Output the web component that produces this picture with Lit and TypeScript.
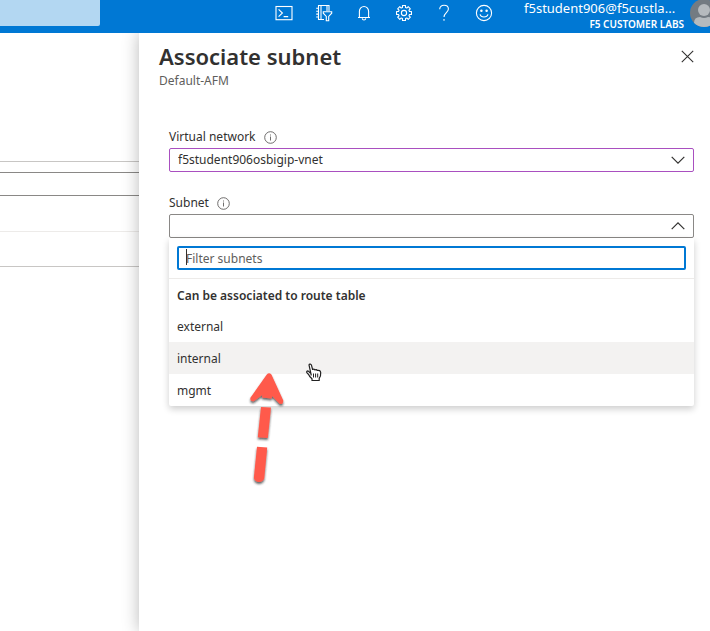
import { LitElement, html, css, svg } from "lit";
import { customElement, state } from "lit/decorators.js";
import { classMap } from "lit/directives/class-map.js";

const infoIcon = html`<svg class="info" viewBox="0 0 13 13" width="13" height="13" aria-hidden="true">
  <circle cx="6.5" cy="6.5" r="5.8" fill="none" stroke="#605e5c" stroke-width="0.9" />
  <path d="M6.5 5.5v4M6.5 3.5v1" stroke="#605e5c" stroke-width="0.9" />
</svg>`;

const chevron = (up: boolean) => html`<svg class="chevron" viewBox="0 0 14 8" width="14" height="8" aria-hidden="true">
  <path d=${up ? "M.7 7.2 7 .9l6.3 6.3" : "M.7.8 7 7.1 13.3.8"} fill="none" stroke="#323130" stroke-width="1.2" />
</svg>`;

const gearPath = (() => {
  const points: string[] = [];
  for (let i = 0; i < 8; i++) {
    const a = (i * Math.PI) / 4 - Math.PI / 2;
    for (const [r, d] of [[5.7, -0.27], [7.6, -0.2], [7.6, 0.2], [5.7, 0.27]]) {
      points.push(`${(9 + r * Math.cos(a + d)).toFixed(2)} ${(9 + r * Math.sin(a + d)).toFixed(2)}`);
    }
  }
  return `M${points.join("L")}Z`;
})();

const tools = [
  { name: "Cloud Shell", art: svg`<rect x="1" y="2.5" width="16" height="13.2"/><path d="M3.6 5.4 7.4 9l-3.8 3.6M8.6 12.6h4.6"/>` },
  { name: "Directories and subscriptions", art: svg`<path d="M14 7V1.5H3.5v14H9M6 1.5v14M1.2 4.3h2.6M1.2 7.2h2.6M1.2 10.1h2.6M1.2 13h2.6M12 1.5V7"/><path d="M8.3 7.8h8.4v1.4l-3 3.2v4.4h-2.4v-4.4l-3-3.2Z"/>` },
  { name: "Notifications", art: svg`<path d="M3 13.5h12M4.4 13.5V7.3a4.6 4.8 0 0 1 9.2 0v6.2M7.2 14.3c.4 2.2 3.2 2.2 3.6 0"/>` },
  { name: "Settings", art: svg`<path d=${gearPath} stroke-linejoin="round"/><circle cx="9" cy="9" r="2.6"/>` },
  { name: "Help", art: svg`<path d="M4.7 5.2C4.7 2.8 6.4 1.2 9 1.2s4.4 1.5 4.4 3.8c0 3.3-4.4 3.9-4.4 8M9 15v1.8"/>` },
  { name: "Feedback", art: svg`<circle cx="9" cy="9" r="7.6"/><path d="M5 10.4c1 3.5 7 3.5 8 0"/><circle cx="6.4" cy="6.8" r=".7" fill="#fff"/><circle cx="11.6" cy="6.8" r=".7" fill="#fff"/>` },
];

@customElement("app-root")
export class AppRoot extends LitElement {
  @state() private active = "internal";
  private subnets = ["external", "internal", "mgmt"];

  static styles = css`
    :host {
      display: flex;
      flex-direction: column;
      min-height: 100vh;
      overflow: hidden;
      position: relative;
      background: #fff;
      color: #323130;
      font: 12px/16px "Noto Sans", "Open Sans", sans-serif;
    }
    * { box-sizing: border-box; }
    button, input, select { font: inherit; color: inherit; margin: 0; }
    .topbar {
      display: flex;
      height: 33px;
      background: #0078d4;
      color: #fff;
    }
    .search {
      width: 100px;
      height: 26px;
      border: 0;
      border-radius: 0 0 2px 0;
      background: #b3d7f2;
    }
    .tools { display: flex; margin-left: auto; }
    .tool {
      width: 40px;
      height: 26px;
      padding: 4px 11px;
      border: 0;
      background: none;
    }
    .tool svg { display: block; fill: none; stroke: #fff; stroke-width: 1.1; }
    .account {
      display: flex;
      gap: 6px;
      width: 206px;
      padding: 0 0 0 20px;
      border: 0;
      background: none;
      color: #fff;
      text-align: right;
    }
    .who { flex: none; width: 160px; }
    .user { display: block; font-size: 13px; line-height: 16px; text-align: left; }
    .tenant { display: block; font-size: 10px; line-height: 16px; font-weight: 600; }
    .avatar { flex: none; display: block; }
    .workspace {
      flex: 1;
      display: grid;
      grid-template-columns: 139px minmax(0, 1fr);
    }
    .page { padding-top: 128px; }
    .row { border-bottom: 1px solid #c8c6c4; }
    .row.gap { height: 1px; }
    .row.search-row {
      height: 24px;
      margin-top: 10px;
      border-top: 1px solid #8a8886;
      border-bottom: 1px solid #8a8886;
    }
    .row.head { height: 36px; border-color: #edebe9; }
    .row.item { height: 35px; }
    .panel {
      position: relative;
      padding: 10px 16px 0 20px;
      background: #fff;
      box-shadow: 0 0 16px rgba(0, 0, 0, 0.28);
      clip-path: inset(0 0 0 -20px);
    }
    .title { display: flex; justify-content: space-between; align-items: center; }
    h1 { margin: 0; font-size: 22px; line-height: 26px; font-weight: 600; }
    .sub { margin: 4px 0 0; color: #605e5c; }
    .close { padding: 0; width: 13px; height: 13px; border: 0; background: none; }
    .close svg { display: block; }
    .form { padding: 40px 0 0 10px; }
    .field { position: relative; margin-bottom: 23px; }
    .label { display: flex; align-items: center; gap: 8px; margin-bottom: 3px; }
    .info { display: block; }
    .control { position: relative; }
    .box {
      display: block;
      width: 100%;
      height: 24px;
      padding: 0 8px;
      border: 1px solid #8a8886;
      border-radius: 2px;
      background: #fff;
      text-align: left;
      appearance: none;
      outline: none;
    }
    .box.changed { border-color: #a94fc0; }
    .chevron { position: absolute; right: 9px; top: 8px; pointer-events: none; }
    .menu {
      position: absolute;
      top: 100%;
      left: 0;
      right: 0;
      background: #fff;
      border-radius: 0 0 2px 2px;
      box-shadow: 0 3px 7px rgba(0, 0, 0, 0.2);
    }
    .filter { position: relative; padding: 8px; border-bottom: 1px solid #edebe9; }
    .filter input {
      display: block;
      width: 100%;
      height: 24px;
      padding: 0 7px;
      border: 2px solid #0078d4;
      border-radius: 2px;
      background: #fff;
      outline: none;
    }
    .filter input::placeholder { color: #605e5c; opacity: 1; }
    .caret { position: absolute; left: 17px; top: 11px; width: 1px; height: 16px; background: #323130; }
    .group { padding: 9px 8px 6px; font-weight: 600; }
    .options { margin: 0; padding: 0; list-style: none; }
    .option { padding: 9px 8px 7px; }
    .option.active { background: #f3f2f1; }
    .arrow { position: absolute; left: 240px; top: 366px; pointer-events: none; }
    .pointer { position: absolute; left: 305px; top: 363px; pointer-events: none; }
  `;

  render() {
    return html`
      <header class="topbar">
        <input class="search" aria-label="Search resources" />
        <div class="tools">
          ${tools.map((t) => html`<button class="tool" aria-label=${t.name}>
            <svg viewBox="0 0 18 18" width="18" height="18">${t.art}</svg>
          </button>`)}
        </div>
        <button class="account">
          <span class="who">
            <span class="user">f5student906@f5custla...</span>
            <span class="tenant">F5 CUSTOMER LABS</span>
          </span>
          <svg class="avatar" viewBox="0 0 28 28" width="28" height="28" aria-hidden="true">
            <defs><clipPath id="face"><circle cx="14" cy="13" r="14" /></clipPath></defs>
            <g clip-path="url(#face)">
              <rect width="28" height="28" fill="#737b82" />
              <circle cx="14" cy="10" r="6" fill="#b5babe" />
              <path d="M4 28v-5q0-6 6-6 4 2 8 0 6 0 6 6v5Z" fill="#b5babe" />
            </g>
          </svg>
        </button>
      </header>
      <div class="workspace">
        <main class="page">
          <div class="row gap"></div>
          <div class="row search-row"></div>
          <div class="row head"></div>
          <div class="row item"></div>
        </main>
        <section class="panel">
          <div class="title">
            <h1>Associate subnet</h1>
            <button class="close" aria-label="Close">
              <svg viewBox="0 0 13 13" width="13" height="13"><path d="M.8.8l11.4 11.4M12.2.8.8 12.2" stroke="#323130" stroke-width="1.1" /></svg>
            </button>
          </div>
          <p class="sub">Default-AFM</p>
          <form class="form">
            <div class="field">
              <label class="label" for="vnet">Virtual network ${infoIcon}</label>
              <div class="control">
                <select class="box changed" id="vnet"><option>f5student906osbigip-vnet</option></select>
                ${chevron(false)}
              </div>
            </div>
            <div class="field">
              <label class="label" for="subnet">Subnet ${infoIcon}</label>
              <div class="control">
                <button class="box" id="subnet" type="button" role="combobox" aria-expanded="true" aria-controls="subnets"></button>
                ${chevron(true)}
                <div class="menu">
                  <div class="filter">
                    <input placeholder="Filter subnets" aria-label="Filter subnets" />
                    <span class="caret"></span>
                  </div>
                  <div class="group" id="group">Can be associated to route table</div>
                  <ul class="options" id="subnets" role="listbox" aria-labelledby="group">
                    ${this.subnets.map((s) => html`<li role="option"
                      class=${classMap({ option: true, active: s === this.active })}
                      aria-selected=${s === this.active}
                      @mouseenter=${() => (this.active = s)}>${s}</li>`)}
                  </ul>
                </div>
              </div>
            </div>
          </form>
        </section>
      </div>
      <svg class="arrow" viewBox="0 0 50 130" width="50" height="130" aria-hidden="true">
        <defs><filter id="drop" x="-30%" y="-30%" width="160%" height="160%">
          <feDropShadow dx="0" dy="2" stdDeviation="0.8" flood-color="#222" flood-opacity="0.7" />
        </filter></defs>
        <g filter="url(#drop)" fill="#ff5a4c">
          <path d="M26.8 8.6Q29 5.8 31.4 8.6L43.3 34.5Q43.3 39 39.6 37.8L32 30 31.8 32.4 22 31.4 22.2 29 13.8 35.2Q9.8 35.7 10.4 31.8Z" />
          <path d="M21 41 31 41.6 27.8 72 17.8 71.3Z" />
          <path d="M17 80.8 27.2 81.5 24.2 112.5Q22.5 116.5 18 115.9 14 115 13.9 111.5Z" />
        </g>
      </svg>
      <svg class="pointer" viewBox="0 0 18 20" width="18" height="20" aria-hidden="true">
        <path d="M6.3 12.5 4 1.9Q4.3.9 5.5 1.2 6.3 1.5 6.5 2.3L7.6 6.5Q8.9 5.6 9.9 6.9 11.3 6 12.2 7.4 15.3 6.8 15.7 9.5 16 13 14.2 15.4V17.5H7V15.8Q4.6 14 3.6 11.5L1.8 9.7Q1.3 8 3 7.9L5.3 10" fill="#fff" stroke="#222" stroke-width="1.2" stroke-linejoin="round" />
        <path d="M8.5 10.5v4M10.6 10.5v4M12.7 10.5v4" stroke="#222" stroke-width="1" />
      </svg>
    `;
  }
}
